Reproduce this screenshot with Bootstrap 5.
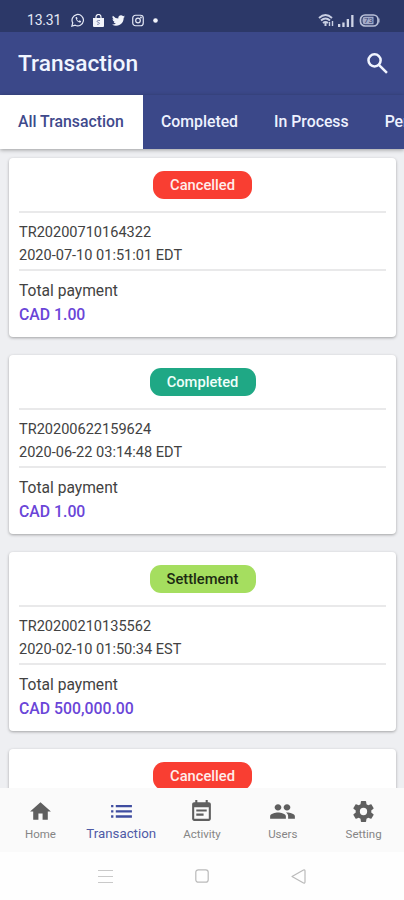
<!DOCTYPE html>
<html lang="en">
<head>
<meta charset="utf-8">
<meta name="viewport" content="width=device-width, initial-scale=1">
<title>Transaction</title>
<link href="https://cdn.jsdelivr.net/npm/bootstrap@5.3.0/dist/css/bootstrap.min.css" rel="stylesheet">
<style>
body{font-family:Roboto,"Noto Sans",sans-serif;height:900px;background:#eeeff2;color:#424242}
svg{display:block;flex:none}
.screen{height:900px}
.status{height:32px;background:#2c3868;color:#e4e8f5;padding:9px 24px 0 27px}
.clock{font-size:14px;line-height:23px;letter-spacing:-.2px;width:43.500px}
.camera-icon{margin-left:7px}
.dot-icon{margin-left:9px}
.signals{margin-top:5px}
.battery-icon{margin-left:5px}
.topbar{height:63px;background:#3b4889;padding:0 16px 0 18px}
.topbar h1{font-size:22.700px;font-weight:500;line-height:30px;color:#f1f5ff;padding-top:1px}
.tabs{height:54px;background:#3b4889;box-shadow:0 1px 4px rgba(0,0,0,.35);z-index:2;position:relative}
.tabs .nav-link{color:#eef2ff;font-size:15.800px;font-weight:500;line-height:53px;height:54px;padding:0 18px;border-radius:0;white-space:nowrap}
.tabs .nav-link.active{background:#fff;color:#3f4a8c;width:143px;flex:none}
.feed{padding:9px 8px 0 9px;gap:18px}
.tx{height:179px;flex:none;border:0;border-radius:4px;padding:13px 10px 0;box-shadow:0 1px 3px rgba(0,0,0,.32)}
.pill{height:28px;line-height:29px;border-radius:11px;font-size:14.700px;font-weight:500;text-align:center;width:106px;margin-bottom:12px}
.pill-c{background:#f93e32;color:#ffeceb;width:99px}
.pill-d{background:#1fa885;color:#effffa}
.pill-s{background:#a5de5f;color:#1c2a12}
.rule{height:2px;background:#e9e9ea}
.tx p{margin:0;font-size:14.550px;line-height:22.500px;white-space:nowrap}
.ids{padding-top:9px;height:56px}
.pay{padding-top:8px}
.tx .pay p{font-size:15.600px;line-height:24px}
.tx .pay .amt{color:#6a45d8;font-weight:500;font-size:15.800px}
.bottom{height:64px;background:#fafafa}
.bottom .nav-link{flex:1 1 0;padding:11px 0 0;color:#858585;font-size:11.500px;line-height:18px;min-width:0}
.bottom svg{color:#5f5f5f;margin-bottom:1px}
.bottom .nav-link.active{color:#4f5ba6;font-size:13.300px}
.bottom .active svg{color:#3f4da0}
.sys{height:48px;background:#fefefe;gap:82px}
</style>
</head>
<body>
<div class="screen d-flex flex-column overflow-hidden">
  <div class="status d-flex align-items-start flex-shrink-0">
    <span class="clock">13.31</span>
    <div class="d-flex align-items-center mt-1">
      <svg width="14" height="14" viewBox="0 0 16 16" fill="none" stroke="currentColor" stroke-width="1.4"><path d="M1 15l1-3.700A6.500 6.500 0 1 1 4.800 14z"/><path d="M5.400 4.500c-.7 2.800 2.600 6.500 5.600 6.300l.6-1.500-1.800-.9-.8.9c-1-.4-1.800-1.200-2.200-2.200l.7-.8-.8-1.800z" fill="currentColor" stroke="none"/></svg>
      <svg class="ms-2" width="11" height="13" viewBox="0 0 11 13"><path d="M3 4V3a2.500 2.500 0 0 1 5 0v1" fill="none" stroke="#f2f4fb" stroke-width="1.200"/><path d="M0 4h11v8a1 1 0 0 1-1 1H1a1 1 0 0 1-1-1z" fill="#f2f4fb"/><path d="M7 6.500H5.200c-1.500 0-1.500 1.800 0 1.800s1.700 2 0 2H4" fill="none" stroke="#7881a8" stroke-width=".9"/></svg>
      <svg class="ms-2" width="13" height="13" viewBox="0 0 24 24"><path fill="#f2f4fb" d="M24 4.600a10 10 0 0 1-2.800.8 5 5 0 0 0 2.100-2.700 10 10 0 0 1-3.100 1.200 4.900 4.900 0 0 0-8.400 4.500A14 14 0 0 1 1.700 3.100a4.900 4.900 0 0 0 1.500 6.600 5 5 0 0 1-2.200-.6 4.900 4.900 0 0 0 3.900 4.900 5 5 0 0 1-2.200.1 4.900 4.900 0 0 0 4.600 3.400A9.900 9.900 0 0 1 0 19.500 14 14 0 0 0 21.500 7.100 10 10 0 0 0 24 4.600z"/></svg>
      <svg class="camera-icon" width="12" height="13" viewBox="0 0 13 13" fill="none" stroke="currentColor" stroke-width="1.300"><rect x=".8" y=".8" width="11.400" height="11.400" rx="3"/><circle cx="6.500" cy="6.500" r="2.500"/><circle cx="9.700" cy="3.300" r=".4"/></svg>
      <svg class="dot-icon" width="5" height="5" viewBox="0 0 5 5"><circle cx="2.500" cy="2.500" r="2.300" fill="#f2f4fb"/></svg>
    </div>
    <div class="signals d-flex align-items-center ms-auto">
      <svg width="16" height="13" viewBox="0 0 16 13" fill="none" stroke="#c9cfe3"><path d="M1 4q6.500-6 13 0M3 6.500q4.500-4 9 0M5 9q2.500-2.200 5 0" stroke-width="1.900"/><path d="M7.500 8.500v3.500" stroke-width="2"/><path d="M11.500 8v4M14.500 7v5" stroke-width="1.400"/></svg>
      <svg class="ms-1" width="16" height="12" viewBox="0 0 16 12" fill="#cfd4e6"><path d="M0 9h2.300v3H0zM4.300 7.500h2.300V12H4.300zM8.700 4H11v8H8.700zM13.200 0h2.300v12h-2.300z"/></svg>
      <svg class="battery-icon" width="21" height="13" viewBox="0 0 20 13"><rect x="1" y="1" width="17.500" height="11" rx="4.500" fill="none" stroke="#b9c0d8" stroke-width="1.700"/><path d="M5 2.800h9v7.400H5q-2 0-2-3.700t2-3.700z" fill="#a3abc9"/><path d="M19.500 4.500v4" stroke="#b9c0d8"/><text x="4.500" y="9.300" font-size="8" fill="#3c4777">73</text></svg>
    </div>
  </div>
  <header class="topbar d-flex align-items-center justify-content-between flex-shrink-0">
    <h1 class="m-0">Transaction</h1>
    <svg width="21" height="21" viewBox="0 0 20 20" fill="none" stroke="#f1f5ff" stroke-width="2.400"><circle cx="7.200" cy="7" r="5.800"/><path d="M11.300 11.300l7.700 7.700"/></svg>
  </header>
  <nav class="tabs nav flex-nowrap flex-shrink-0">
    <a class="nav-link active" href="#">All Transaction</a>
    <a class="nav-link" href="#">Completed</a>
    <a class="nav-link" href="#">In Process</a>
    <a class="nav-link" href="#">Pending</a>
  </nav>
  <main class="feed d-flex flex-column flex-grow-1 overflow-hidden">
    <article class="card tx">
      <span class="pill pill-c mx-auto">Cancelled</span>
      <div class="rule"></div>
      <div class="ids"><p>TR20200710164322</p><p>2020-07-10 01:51:01 EDT</p></div>
      <div class="rule"></div>
      <div class="pay"><p>Total payment</p><p class="amt">CAD 1.00</p></div>
    </article>
    <article class="card tx">
      <span class="pill pill-d mx-auto">Completed</span>
      <div class="rule"></div>
      <div class="ids"><p>TR20200622159624</p><p>2020-06-22 03:14:48 EDT</p></div>
      <div class="rule"></div>
      <div class="pay"><p>Total payment</p><p class="amt">CAD 1.00</p></div>
    </article>
    <article class="card tx">
      <span class="pill pill-s mx-auto">Settlement</span>
      <div class="rule"></div>
      <div class="ids"><p>TR20200210135562</p><p>2020-02-10 01:50:34 EST</p></div>
      <div class="rule"></div>
      <div class="pay"><p>Total payment</p><p class="amt">CAD 500,000.00</p></div>
    </article>
    <article class="card tx">
      <span class="pill pill-c mx-auto">Cancelled</span>
    </article>
  </main>
  <nav class="bottom nav flex-nowrap flex-shrink-0">
    <a class="nav-link d-flex flex-column align-items-center" href="#"><svg width="25" height="25" viewBox="0 0 24 24" fill="currentColor"><path d="M10 20v-6h4v6h5v-8h3L12 3 2 12h3v8z"/></svg>Home</a>
    <a class="nav-link active d-flex flex-column align-items-center" href="#"><svg width="25" height="25" viewBox="0 0 24 24" fill="currentColor"><path d="M2 5.700h2.200V8H2zM2 10.700h2.200V13H2zM2 15.700h2.200V18H2zM6.500 5.700H22V8H6.500zM6.500 10.700H22V13H6.500zM6.500 15.700H22V18H6.500z"/></svg>Transaction</a>
    <a class="nav-link d-flex flex-column align-items-center" href="#"><svg width="25" height="25" viewBox="0 0 24 24" fill="currentColor"><path d="M17 10H7v2h10v-2zm2-7h-1V1h-2v2H8V1H6v2H5c-1.100 0-2 .9-2 2v14c0 1.100.9 2 2 2h14c1.100 0 2-.9 2-2V5c0-1.100-.9-2-2-2zm0 16H5V8h14v11zm-5-5H7v2h7v-2z"/></svg>Activity</a>
    <a class="nav-link d-flex flex-column align-items-center" href="#"><svg width="27" height="25" viewBox="0 0 24 24" preserveAspectRatio="none" fill="currentColor"><path d="M16 11c1.660 0 2.990-1.340 2.990-3S17.660 5 16 5s-3 1.340-3 3 1.340 3 3 3zm-8 0c1.660 0 2.990-1.340 2.990-3S9.660 5 8 5 5 6.340 5 8s1.340 3 3 3zm0 2c-2.330 0-7 1.170-7 3.500V19h14v-2.500c0-2.330-4.670-3.500-7-3.500zm8 0c-.29 0-.62.020-.97.050 1.160.84 1.970 1.970 1.970 3.450V19h6v-2.500c0-2.330-4.670-3.500-7-3.500z"/></svg>Users</a>
    <a class="nav-link d-flex flex-column align-items-center" href="#"><svg width="25" height="25" viewBox="0 0 24 24" fill="currentColor"><path d="M19.430 12.980c.04-.32.070-.64.070-.98s-.03-.66-.07-.98l2.110-1.650c.19-.15.240-.42.120-.64l-2-3.460c-.12-.22-.39-.3-.61-.22l-2.490 1c-.52-.4-1.080-.73-1.690-.98l-.38-2.650A.49.49 0 0 0 14 2h-4c-.25 0-.46.180-.49.420l-.38 2.650c-.61.250-1.170.590-1.690.98l-2.490-1c-.23-.09-.49 0-.61.220l-2 3.460c-.13.220-.07.490.12.640l2.110 1.650c-.04.320-.07.650-.07.980s.03.660.070.980l-2.110 1.650c-.19.150-.24.420-.12.640l2 3.460c.12.220.39.300.61.220l2.490-1c.52.400 1.080.730 1.690.980l.38 2.650c.03.240.24.420.49.420h4c.25 0 .46-.18.490-.42l.38-2.650c.61-.25 1.170-.59 1.690-.98l2.490 1c.23.090.49 0 .61-.22l2-3.460c.12-.22.070-.49-.12-.64zM12 15.500a3.500 3.500 0 1 1 0-7 3.500 3.500 0 0 1 0 7z"/></svg>Setting</a>
  </nav>
  <div class="sys d-flex justify-content-center align-items-center flex-shrink-0">
    <svg width="15" height="15" viewBox="0 0 15 15" stroke="#c9c9c9" stroke-width="1.200"><path d="M0 1.500h15M0 7.500h15M0 13.500h15"/></svg>
    <svg width="14" height="14" viewBox="0 0 14 14" fill="none" stroke="#bababa" stroke-width="1.200"><rect x=".8" y=".8" width="12.400" height="12.400" rx="2.500"/></svg>
    <svg width="15" height="15" viewBox="0 0 15 15" fill="none" stroke="#bababa" stroke-width="1.200" stroke-linejoin="round"><path d="M1 7.500L12.500 1q1.500-.4 1.500 1v11q0 1.400-1.500 1z"/></svg>
  </div>
</div>
<script src="https://cdn.jsdelivr.net/npm/bootstrap@5.3.0/dist/js/bootstrap.bundle.min.js"></script>
</body>
</html>
